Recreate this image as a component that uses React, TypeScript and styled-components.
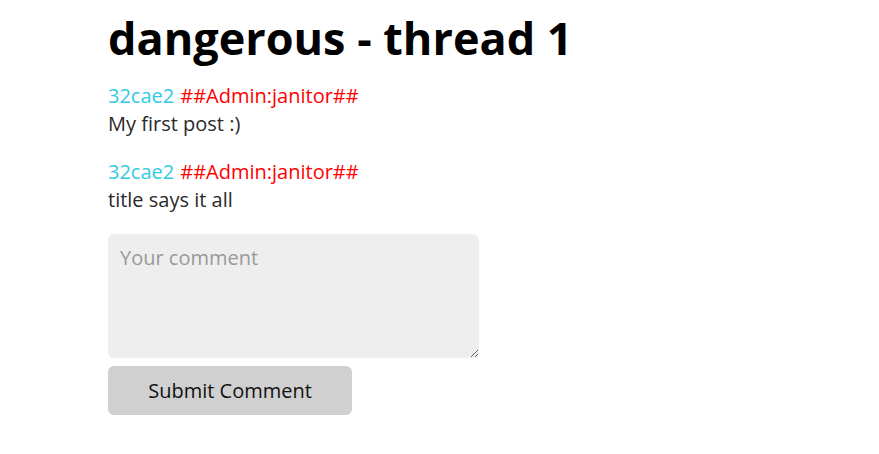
import React from "react";
import styled, { createGlobalStyle } from "styled-components";

const Global = createGlobalStyle`
  html, body { margin: 0; padding: 0; background: #fff; }
  body { font-family: "Open Sans", "Noto Sans", sans-serif; }
`;

const Page = styled.main`
  padding: 0 108px;
`;

const Title = styled.h1`
  margin: 0;
  padding-top: 8px;
  font-size: 45px;
  line-height: 60px;
  font-weight: 700;
  color: #000;
`;

const Posts = styled.div`
  display: flex;
  flex-direction: column;
  gap: 20px;
  margin-top: 14px;
`;

const Post = styled.div`
  display: flex;
  flex-direction: column;
  font-size: 20px;
  line-height: 28px;
`;

const Author = styled.div`
  display: flex;
  gap: 6px;
`;

const Name = styled.span<{ $color: string }>`
  color: ${(p) => p.$color};
`;

const Body = styled.div`
  color: #2a2a2a;
`;

const Form = styled.form`
  display: flex;
  flex-direction: column;
  align-items: flex-start;
  gap: 8px;
  margin-top: 20px;
`;

const TextArea = styled.textarea`
  box-sizing: border-box;
  width: 371px;
  height: 124px;
  padding: 10px 12px;
  border: none;
  border-radius: 6px;
  background: #eeeeee;
  font-family: inherit;
  font-size: 20px;
  color: #222;
  outline: none;
  &::placeholder { color: #999; }
`;

const Button = styled.button`
  width: 244px;
  height: 49px;
  border: none;
  border-radius: 6px;
  background: #d0d0d0;
  color: #111;
  font-family: inherit;
  font-size: 20px;
  cursor: pointer;
`;

const posts = [
  { id: "32cae2", role: "##Admin:janitor##", text: "My first post :)" },
  { id: "32cae2", role: "##Admin:janitor##", text: "title says it all" },
];

export default function App() {
  return (
    <>
      <Global />
      <Page>
        <Title>dangerous - thread 1</Title>
        <Posts>
          {posts.map((p, i) => (
            <Post key={i}>
              <Author>
                <Name $color={`#${p.id}`}>{p.id}</Name>
                <Name $color="#ff0000">{p.role}</Name>
              </Author>
              <Body>{p.text}</Body>
            </Post>
          ))}
        </Posts>
        <Form onSubmit={(e) => e.preventDefault()}>
          <TextArea placeholder="Your comment" />
          <Button type="submit">Submit Comment</Button>
        </Form>
      </Page>
    </>
  );
}
